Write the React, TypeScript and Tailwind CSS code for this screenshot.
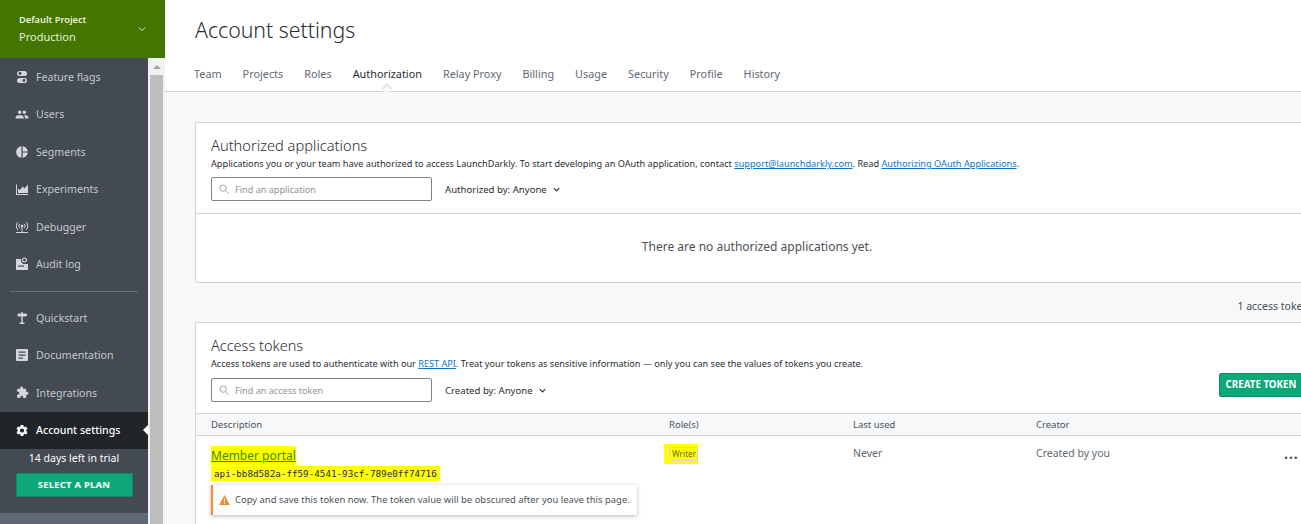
import { MdPeople, MdPieChart, MdExtension, MdSettings } from "react-icons/md";

const FONT = "font-['Noto_Sans','Open_Sans',sans-serif]";

function FlagsIcon() {
  return (
    <svg viewBox="0 0 14 14" className="h-[14px] w-[14px]" fill="currentColor">
      <rect x="2" y="1" width="10" height="5" rx="2.5" />
      <rect x="2" y="8" width="10" height="5" rx="2.5" />
      <circle cx="5" cy="3.5" r="1.4" fill="#434a52" />
      <circle cx="9" cy="10.5" r="1.4" fill="#434a52" />
    </svg>
  );
}

function ChartIcon() {
  return (
    <svg viewBox="0 0 14 14" className="h-[14px] w-[14px]" fill="currentColor">
      <path d="M1 2.500h1V12h11v1H1z" />
      <path d="M3 11V6.500l2 1.500 2.500-3.500L9.500 6.500 13 2.500V11z" />
    </svg>
  );
}

function DebuggerIcon() {
  return (
    <svg viewBox="0 0 14 14" className="h-[14px] w-[14px]" fill="none" stroke="currentColor" strokeWidth="1">
      <circle cx="7" cy="6" r="1" fill="currentColor" />
      <path d="M7 7v5M1 12.500h12M4.800 3.800a3 3 0 0 0 0 4.400M9.200 3.800a3 3 0 0 1 0 4.400M3 2a5.500 5.500 0 0 0 0 8M11 2a5.500 5.500 0 0 1 0 8" />
    </svg>
  );
}

function AuditIcon() {
  return (
    <svg viewBox="0 0 14 14" className="h-[14px] w-[14px]" fill="currentColor">
      <path d="M1 2h5v2.500L8 7h5v6H1z" />
      <circle cx="9.500" cy="3" r="2" fill="none" stroke="currentColor" strokeWidth="1.200" />
      <rect x="3" y="8.500" width="6" height="1.200" fill="#434a52" />
    </svg>
  );
}

function SignIcon() {
  return (
    <svg viewBox="0 0 14 14" className="h-[14px] w-[14px]" fill="currentColor">
      <path d="M6.300 1h1.400v1.500H11L12.500 4 11 5.500H7.700v6H9.500V13h-5v-1.500h1.800v-6H3.500L2 4l1.500-1.500h2.800z" />
    </svg>
  );
}

function DocIcon() {
  return (
    <svg viewBox="0 0 14 14" className="h-[14px] w-[14px]" fill="currentColor">
      <path fillRule="evenodd" d="M2 1h10a1 1 0 0 1 1 1v10a1 1 0 0 1-1 1H2a1 1 0 0 1-1-1V2a1 1 0 0 1 1-1zm1.500 2.500v1.200h7V3.500zm0 3v1.200h7V6.500zm0 3v1.200h4.500V9.500z" />
    </svg>
  );
}

function NavItem({ icon, label, active }: { icon: React.ReactNode; label: string; active?: boolean }) {
  return (
    <div className={`relative flex h-[37.5px] shrink-0 items-center gap-[7px] pl-[15px] text-[10.6px] ${active ? "bg-[#212429] font-medium text-white" : "text-[#c3c8ce]"}`}>
      <span className={`flex w-[14px] justify-center ${active ? "text-white" : "text-[#d3d7db]"}`}>{icon}</span>
      <span className="mt-[2.25px]">{label}</span>
      {active && (
        <span className="absolute right-0 top-1/2 h-0 w-0 -translate-y-1/2 border-y-[5px] border-r-[5px] border-y-transparent border-r-white" />
      )}
    </div>
  );
}

function Sidebar() {
  return (
    <aside className="flex h-[524px] w-[165px] shrink-0 flex-col overflow-hidden">
      <div className="flex h-[58px] shrink-0 items-center justify-between bg-[#437500] pb-px pl-[19px] pr-[19px] text-[#e7f0da]">
        <div className="flex flex-col gap-[2px]">
          <span className="text-[9.25px] font-semibold leading-[14px]">Default Project</span>
          <span className="text-[11px] leading-[16px]">Production</span>
        </div>
        <svg viewBox="0 0 10 6" className="h-[6px] w-[8px]" fill="none" stroke="currentColor" strokeWidth="1.2">
          <path d="M1 1l4 4 4-4" />
        </svg>
      </div>
      <div className="flex min-h-0 flex-1">
        <nav className="flex w-[148px] flex-col bg-[#434a52]">
          <NavItem icon={<FlagsIcon />} label="Feature flags" />
          <NavItem icon={<MdPeople size={15} />} label="Users" />
          <NavItem icon={<MdPieChart size={14} />} label="Segments" />
          <NavItem icon={<ChartIcon />} label="Experiments" />
          <NavItem icon={<DebuggerIcon />} label="Debugger" />
          <NavItem icon={<AuditIcon />} label="Audit log" />
          <div className="mx-[10px] mb-[7px] mt-2 h-px shrink-0 bg-[#687079]" />
          <NavItem icon={<SignIcon />} label="Quickstart" />
          <NavItem icon={<DocIcon />} label="Documentation" />
          <NavItem icon={<MdExtension size={13} />} label="Integrations" />
          <NavItem icon={<MdSettings size={15} />} label="Account settings" active />
          <p className="pt-px text-center text-[10.5px] leading-[17px] text-white">14 days left in trial</p>
          <button className="mx-auto mt-[6px] h-6 w-[117px] shrink-0 rounded-[1px] border border-[#0f8a64] bg-[#0ea878] text-[9.5px] font-bold tracking-[0.2px] text-white">
            SELECT A PLAN
          </button>
          <div className="mt-4 flex-1 bg-[#5f6973]" />
        </nav>
        <div className="flex w-[17px] flex-col bg-[#f1f1f1] px-[2px]">
          <div className="flex h-[17px] shrink-0 items-center justify-center">
            <span className="h-0 w-0 border-x-[4px] border-b-[4px] border-x-transparent border-b-[#a3a3a3]" />
          </div>
          <div className="flex-1 bg-[#bebebe]" />
        </div>
      </div>
    </aside>
  );
}

const TABS = ["Team", "Projects", "Roles", "Authorization", "Relay Proxy", "Billing", "Usage", "Security", "Profile", "History"];

function Tabs() {
  return (
    <div className="ml-[-1px] mt-[20px] flex gap-[21px] text-[10.85px] leading-[16px] text-[#5f6973]">
      {TABS.map((t) => (
        <span key={t} className={`relative ${t === "Authorization" ? "text-[#292d32]" : ""}`}>
          {t}
          {t === "Authorization" && (
            <span className="absolute left-1/2 top-[19px] h-[7px] w-[7px] -translate-x-1/2 rotate-45 border-l border-t border-[#d0d5da] bg-[#f7f8fa]" />
          )}
        </span>
      ))}
    </div>
  );
}

function SearchBox({ placeholder }: { placeholder: string }) {
  return (
    <div className="flex h-6 w-[221px] items-center gap-[6px] rounded-[2px] border border-[#7b848d] bg-white pl-[7px] text-[9.1px] text-[#8d959d]">
      <svg viewBox="0 0 12 12" className="h-[10px] w-[10px]" fill="none" stroke="currentColor" strokeWidth="1">
        <circle cx="5" cy="5" r="3.8" />
        <path d="M8 8l3.500 3.500" />
      </svg>
      <span className="pt-[2px]">{placeholder}</span>
    </div>
  );
}

function FilterLabel({ label }: { label: string }) {
  return (
    <span className="ml-px flex items-center gap-[6px] pt-[2px] text-[9.6px] text-[#292d32]">
      {label}
      <svg viewBox="0 0 10 6" className="h-[5px] w-[7px]" fill="none" stroke="currentColor" strokeWidth="1.500">
        <path d="M1 1l4 4 4-4" />
      </svg>
    </span>
  );
}

function AppsCard() {
  return (
    <section className="h-[161px] rounded-[2px] border border-[#d0d5da] bg-white">
      <div className="h-[91px] border-b border-[#d0d5da] px-[15px] pt-[12px]">
        <h2 className="text-[14.65px] font-light leading-[20px] text-[#292d32]">Authorized applications</h2>
        <p className="mt-[2px] text-[9.18px] leading-[14px] text-[#292d32]">
          Applications you or your team have authorized to access LaunchDarkly. To start developing an OAuth application, contact{" "}
          <a className="text-[#0b78d0] underline">support@launchdarkly.com</a>. Read{" "}
          <a className="text-[#0b78d0] underline">Authorizing OAuth Applications</a>.
        </p>
        <div className="mt-[6px] flex items-center gap-[12px]">
          <SearchBox placeholder="Find an application" />
          <FilterLabel label="Authorized by:  Anyone" />
        </div>
      </div>
      <div className="flex h-[68px] items-center justify-center pb-[3px] text-[12px] text-[#4a5159]">
        There are no authorized applications yet.
      </div>
    </section>
  );
}

const COLS = "grid grid-cols-[458px_184px_183px_248px_1fr] px-[15px]";

function TokensCard() {
  return (
    <section className="rounded-[2px] border border-[#d0d5da] bg-white">
      <div className="relative flex h-[90px] flex-col px-[15px] pt-[12px]">
        <h2 className="text-[14.5px] font-light leading-[20px] text-[#292d32]">Access tokens</h2>
        <p className="mt-[2px] text-[9.15px] leading-[14px] text-[#292d32]">
          Access tokens are used to authenticate with our <a className="text-[#0b78d0] underline">REST API</a>. Treat your tokens as sensitive information — only you can see the values of tokens you create.
        </p>
        <div className="mt-[7px] flex items-start justify-between">
          <div className="flex items-center gap-[12px]">
            <SearchBox placeholder="Find an access token" />
            <FilterLabel label="Created by:  Anyone" />
          </div>
          <button className="mt-[-5px] h-6 w-[84px] rounded-[2px] border border-[#0f8a64] bg-[#0ea878] text-[9.75px] font-bold text-white">
            CREATE TOKEN
          </button>
        </div>
      </div>
      <div className={`${COLS} h-[23px] items-center border-y border-[#d0d5da] bg-[#f7f8fa] pt-[2px] text-[9.5px] text-[#4a5159]`}>
        <span>Description</span>
        <span>Role(s)</span>
        <span>Last used</span>
        <span>Creator</span>
      </div>
      <div className={`${COLS} h-[100px] pt-[10px] text-[10.500px] text-[#5f6973]`}>
        <div className="flex flex-col items-start">
          <a className="bg-[#ffff00] text-[12px] leading-[19px] text-[#3d8a00] underline">Member portal</a>
          <code className="mt-px bg-[#ffff00] px-[3px] font-['DejaVu_Sans_Mono',monospace] text-[9.25px] leading-[15px] text-[#292d32]">
            api-bb8d582a-ff59-4541-93cf-789e0ff74716
          </code>
          <div className="mt-[4px] flex h-[30px] w-[426px] items-center gap-[5px] border-l-2 border-[#f98b2c] bg-white pl-[6px] text-[9.45px] whitespace-nowrap text-[#4a5159] shadow-[0_1px_4px_rgba(0,0,0,0.3)]">
            <svg viewBox="0 0 12 11" className="h-[10px] w-[11px]" fill="#f98b2c">
              <path fillRule="evenodd" d="M6 0l6 11H0zM5.400 4v3.500h1.200V4zm0 4.300v1.200h1.200V8.300z" />
            </svg>
            Copy and save this token now. The token value will be obscured after you leave this page.
          </div>
        </div>
        <div>
          <span className="ml-[-5px] mt-[-2px] inline-block bg-[#ffff00] py-[3px] pl-[5px] leading-none">
            <span className="inline-block rounded-[2px] border border-[#d0d5da] py-[2px] pl-[2px] pr-px text-[8.25px] text-[#5f6a00]">Writer</span>
          </span>
        </div>
        <span>Never</span>
        <span>Created by you</span>
        <span className="mt-[-4px] text-[14px] font-bold leading-[24px] tracking-[1px] text-[#4a5159]">...</span>
      </div>
    </section>
  );
}

export default function App() {
  return (
    <div className={`flex h-[524px] w-[1301px] overflow-hidden bg-white ${FONT}`}>
      <Sidebar />
      <main className="flex min-w-0 flex-1 flex-col overflow-hidden bg-[#f7f8fa]">
        <header className="h-[92px] shrink-0 border-b border-[#d0d5da] bg-white pl-[30px] pt-[14px]">
          <h1 className="text-[21.25px] font-light leading-[32px] text-[#292d32]">Account settings</h1>
          <Tabs />
        </header>
        <div className="w-[1136px] pl-[30px] pt-[30px]">
          <div className="w-[1124px]">
            <AppsCard />
            <p className="mt-[15px] whitespace-nowrap pr-[5px] text-right text-[10.500px] leading-[16px] text-[#4a5159]">1 access tokens</p>
            <div className="mt-2">
              <TokensCard />
            </div>
          </div>
        </div>
      </main>
    </div>
  );
}
